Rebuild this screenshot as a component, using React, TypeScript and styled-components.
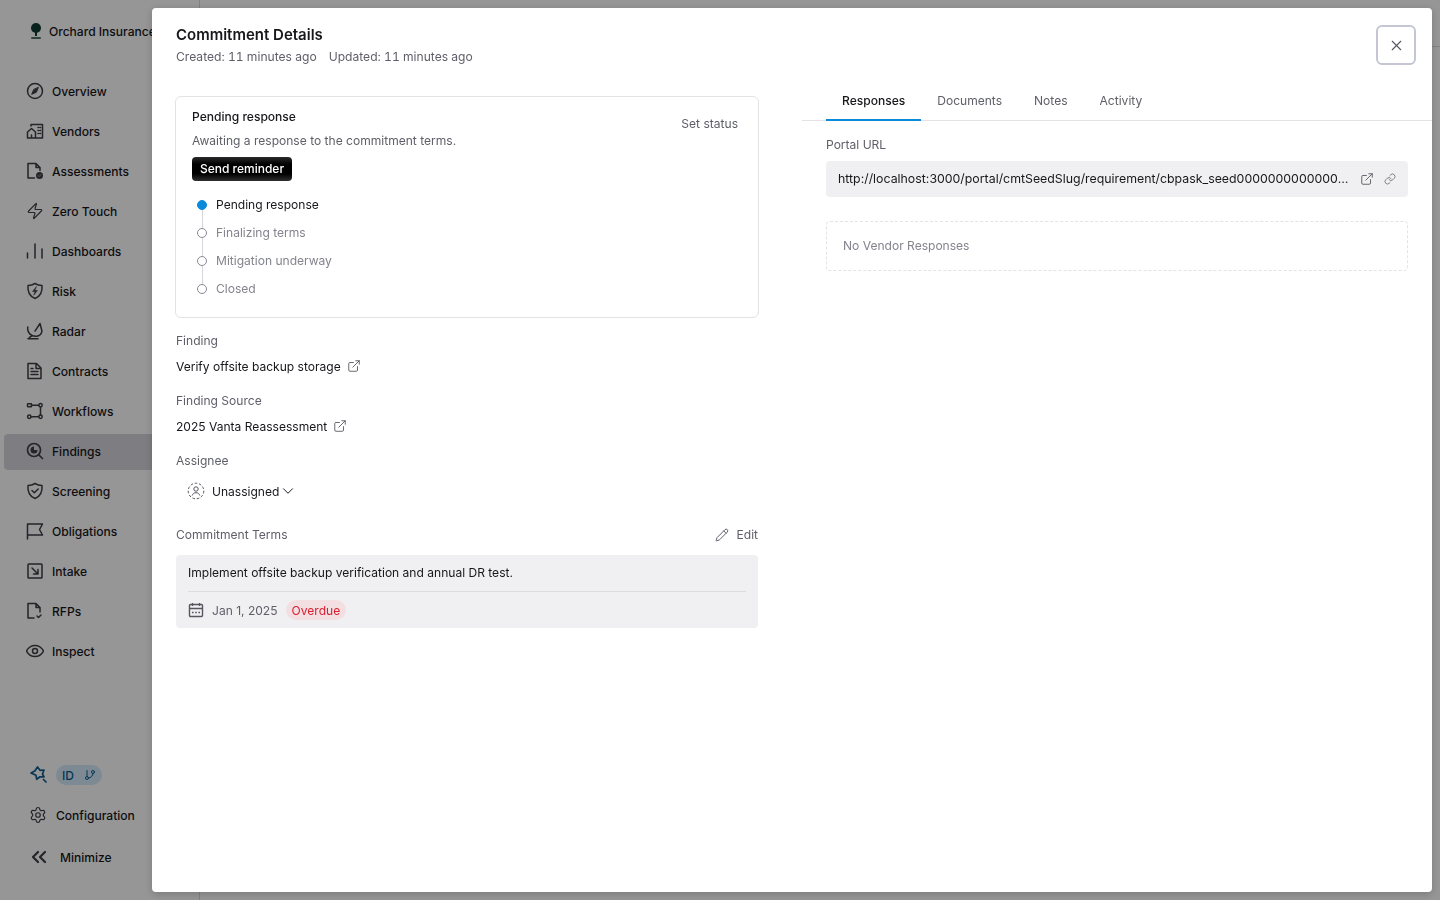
import * as React from "react";
import styled, { createGlobalStyle } from "styled-components";
import { ChevronDown, ChevronsLeft, ExternalLink, GitBranch, Link, Pencil, Settings, X, Zap } from "lucide-react";

const GlobalStyle = createGlobalStyle`
  html, body {
    margin: 0;
    height: 100%;
    overflow: hidden;
    background: #fff;
    font-family: Inter, "Liberation Sans", sans-serif;
    font-size: 12.060px;
    color: #17171c;
  }
  * { box-sizing: border-box; }
`;

const Glyph = ({ children }: { children: React.ReactNode }) => (
  <svg
    width="18"
    height="18"
    viewBox="0 0 18 18"
    fill="none"
    stroke="currentColor"
    strokeWidth="1.5"
    strokeLinecap="round"
    strokeLinejoin="round"
  >
    {children}
  </svg>
);

const OverviewIcon = () => (
  <Glyph>
    <circle cx="9" cy="9" r="7.5" />
    <path d="M12.300 5.700L10.300 10.300 5.700 12.300 7.700 7.700z" fill="currentColor" strokeWidth="1" />
  </Glyph>
);
const VendorsIcon = () => (
  <Glyph>
    <path d="M1.500 16V10L5.500 6.500 9.500 10V16zM5.500 16V13M5 4V2.500H16.500V16H9.500" />
    <path d="M12 5.500h.6M14 5.500h.6M12 8.500h.6M14 8.500h.6M12 11.500h.6M14 11.500h.6" />
  </Glyph>
);
const AssessmentsIcon = () => (
  <Glyph>
    <path d="M8.500 16H2V1.500H10L14 5.500V8.500M10 1.500V5.500H14" />
    <circle cx="13.500" cy="13.500" r="3.500" fill="currentColor" stroke="none" />
    <path d="M12 13.500l1.100 1.100 1.800-1.900" stroke="#999" strokeWidth="1" />
  </Glyph>
);
const DashboardsIcon = () => (
  <Glyph>
    <path d="M1.500 16V11M9 16V2M16 16V7" />
  </Glyph>
);
const RiskIcon = () => (
  <Glyph>
    <path d="M9 1.500C11 2.800 13.300 3.500 16 3.500 16.500 10 14.500 14.500 9 16.500 3.500 14.500 1.500 10 2 3.500 4.700 3.500 7 2.800 9 1.500z" />
    <path d="M10.300 4.800L6.500 9.500H9L7.700 13.200 11.500 8.500H9z" fill="currentColor" strokeWidth=".5" />
  </Glyph>
);
const RadarIcon = () => (
  <Glyph>
    <path d="M1.800 5C.8 11 5.800 14.800 10.500 14.300 13.500 14 15.500 11.800 16 9.200M9 9.200L14 1.500 16 9.200" />
    <path d="M2 16.800H12M2.500 16.800C3.500 15.500 4.500 14.500 6 13.800" />
  </Glyph>
);
const ContractsIcon = () => (
  <Glyph>
    <path d="M2 16.500V1.500H10.500L15 6V16.500zM10 1.500V6.500H15M5 9.500H12M5 12.500H12M5 6.500H7" />
  </Glyph>
);
const WorkflowsIcon = () => (
  <Glyph>
    <rect x="1.500" y="1.800" width="4" height="3" rx=".6" />
    <circle cx="14.500" cy="3.300" r="1.700" />
    <circle cx="3.300" cy="14.700" r="1.700" />
    <circle cx="14.500" cy="14.700" r="1.700" />
    <path d="M5.500 3.300H12.800M14.500 5V13M5 14.700H12.800" />
  </Glyph>
);
const FindingsIcon = () => (
  <Glyph>
    <circle cx="8" cy="8" r="6.500" strokeWidth="1.700" />
    <path d="M12.800 12.800L16.500 16.500" strokeWidth="1.700" />
    <path d="M8 4.500A3.500 3.500 0 1 0 11.500 8H8z" fill="currentColor" stroke="none" />
  </Glyph>
);
const ScreeningIcon = () => (
  <Glyph>
    <path d="M9 1.500C11 2.800 13.300 3.500 16 3.500 16.500 10 14.500 14.500 9 16.500 3.500 14.500 1.500 10 2 3.500 4.700 3.500 7 2.800 9 1.500z" />
    <path d="M6 8.500L8.300 10.800 12.200 7" />
  </Glyph>
);
const ObligationsIcon = () => (
  <Glyph>
    <path d="M1.500 17V2H16.500L13.500 7.500 16.500 13H1.500" />
  </Glyph>
);
const IntakeIcon = () => (
  <Glyph>
    <rect x="2" y="2" width="14" height="14" rx=".8" />
    <path d="M6 6L12 12M12 7.500V12H7.500" />
  </Glyph>
);
const RfpsIcon = () => (
  <Glyph>
    <path d="M8 16H2V1.500H10L14 5.500V10M10 1.500V5.500H14M11 14L12.500 15.500 15 13" />
  </Glyph>
);
const InspectIcon = () => (
  <Glyph>
    <path d="M.5 9C2.500 5.300 5.500 3.500 9 3.500S15.500 5.300 17.500 9C15.500 12.700 12.500 14.500 9 14.500S2.500 12.700.5 9z" />
    <circle cx="9" cy="9" r="2.500" />
  </Glyph>
);
const LogoIcon = () => (
  <svg width="16" height="18" viewBox="0 0 16 18">
    <circle cx="8" cy="6" r="5" fill="#0f3d2e" />
    <rect x="7" y="9" width="2" height="5" fill="#0f3d2e" />
    <rect x="3" y="15" width="10" height="2" rx="1" fill="#55736a" />
  </svg>
);
const SparkleIcon = () => (
  <svg width="20" height="20" viewBox="0 0 20 20" fill="none" stroke="#0e5c8f" strokeWidth="1.700" strokeLinejoin="round" strokeLinecap="round">
    <path d="M8.500 2L11 5.300 15 5 13.500 9 15 12 11 11.800 7.700 14.300 7 10.300 2 8 5.800 6z" />
    <path d="M14.500 14.500L17 17" />
  </svg>
);
const UnassignedIcon = () => (
  <svg width="18" height="18" viewBox="0 0 18 18" fill="none" stroke="#56565f" strokeWidth="1">
    <circle cx="9" cy="9" r="7.800" strokeDasharray="2.600 1.800" />
    <circle cx="9" cy="7" r="2.200" />
    <path d="M5.200 13.500C5.800 11.500 7.200 10.700 9 10.700S12.200 11.500 12.800 13.500" />
  </svg>
);
const CalendarIcon = () => (
  <svg width="16" height="16" viewBox="0 0 16 16" fill="none" stroke="#56565f" strokeWidth="1.400">
    <rect x="1.500" y="2.500" width="13" height="12" rx="1" />
    <path d="M1.500 6.500H14.500M4.500 1V4M11.500 1V4" />
    <path d="M4 10.500H12" strokeDasharray="1.600 1.600" />
  </svg>
);

const Shell = styled.div`
  display: flex;
  height: 900px;
`;

const Sidebar = styled.aside`
  width: 200px;
  flex: none;
  display: flex;
  flex-direction: column;
  border-right: 1px solid #dcdce0;
  padding: 0 4px 31px;
`;

const Brand = styled.div`
  height: 48px;
  margin-top: 7px;
  padding-left: 24px;
  display: flex;
  align-items: center;
  gap: 5px;
  font-weight: 500;
  white-space: nowrap;
`;

const NavList = styled.nav`
  margin-top: 19px;
  display: flex;
  flex-direction: column;
  gap: 4px;
`;

const NavItem = styled.div<{ $active?: boolean }>`
  height: 36px;
  padding: 0 0 2px 22px;
  display: flex;
  align-items: center;
  gap: 8px;
  border-radius: 4px;
  font-weight: 500;
  background: ${(p) => (p.$active ? "#d7d7dd" : "transparent")};
  svg {
    flex: none;
    color: #3f3f47;
  }
`;

const SidebarFoot = styled.div`
  margin-top: auto;
  display: flex;
  flex-direction: column;
`;

const EnvRow = styled.div`
  height: 20px;
  padding-left: 25px;
  display: flex;
  align-items: center;
  gap: 7px;
`;

const EnvPill = styled.div`
  height: 20px;
  width: 46px;
  border-radius: 10px;
  background: #d5ebfb;
  color: #0e5c8f;
  font-weight: 500;
  display: flex;
  align-items: center;
  padding-left: 6px;
  gap: 10px;
`;

const FootLink = styled.div<{ $indent: number }>`
  height: 24px;
  margin-top: 18px;
  padding-left: ${(p) => p.$indent}px;
  display: flex;
  align-items: center;
  gap: 9px;
  font-weight: 500;
  svg {
    color: #3f3f47;
  }
`;

const Main = styled.main`
  flex: 1;
`;

const TopBar = styled.div`
  height: 47px;
  border-bottom: 1px solid #dcdce0;
`;

const Overlay = styled.div`
  position: fixed;
  inset: 0;
  background: rgba(0, 0, 0, 0.41);
`;

const Modal = styled.section`
  position: fixed;
  left: 152px;
  top: 8px;
  width: 1280px;
  height: 884px;
  background: #fff;
  border-radius: 4px;
  box-shadow: 0 2px 8px rgba(0, 0, 0, 0.2);
  display: flex;
  flex-direction: column;
`;

const ModalHeader = styled.header`
  height: 72px;
  padding: 17px 16px 0 24px;
  display: flex;
  justify-content: space-between;
  align-items: flex-start;
`;

const Title = styled.h2`
  margin: 0;
  font-size: 15px;
  line-height: 20px;
  font-weight: 600;
  color: #17171c;
`;

const Subtitle = styled.div`
  margin-top: 3px;
  display: flex;
  gap: 12px;
  line-height: 18px;
  color: #5f5f69;
  font-size: 12.100px;
  font-variant-numeric: tabular-nums;
`;

const CloseButton = styled.button`
  width: 40px;
  height: 40px;
  border: 2px solid #c4c6d4;
  border-radius: 6px;
  background: #fff;
  color: #55555e;
  display: flex;
  align-items: center;
  justify-content: center;
  padding: 0;
`;

const Columns = styled.div`
  flex: 1;
  display: flex;
  min-height: 0;
`;

const LeftColumn = styled.div`
  width: 606px;
  flex: none;
  padding: 16px 0 0 24px;
`;

const RightColumn = styled.div`
  flex: 1;
  margin-left: 44px;
  min-width: 0;
`;

const StatusCard = styled.div`
  width: 584px;
  height: 222px;
  margin-left: -1px;
  border: 1px solid #e3e3e7;
  border-radius: 6px;
  padding: 10px 16px;
  position: relative;
`;

const SetStatus = styled.div`
  position: absolute;
  top: 19px;
  right: 20px;
  line-height: 16px;
  color: #5f5f69;
`;

const StatusTitle = styled.div`
  line-height: 20px;
  font-weight: 500;
`;

const StatusHint = styled.div`
  margin-top: 4px;
  line-height: 20px;
  color: #5f5f69;
`;

const ReminderButton = styled.button`
  margin-top: 6px;
  height: 24px;
  width: 100px;
  padding: 0 0 1px;
  border: 0;
  border-radius: 4px;
  color: #fff;
  font: 500 12px Inter, sans-serif;
  background: linear-gradient(#2b2b2b, #000 30%, #000 70%, #2f2f2f);
`;

const Steps = styled.ol`
  list-style: none;
  margin: 9px 0 0;
  padding: 0 0 0 5px;
`;

const Step = styled.li<{ $current?: boolean }>`
  height: 28px;
  display: flex;
  align-items: center;
  gap: 9px;
  position: relative;
  color: ${(p) => (p.$current ? "#17171c" : "#84848e")};
  &:not(:last-child)::after {
    content: "";
    position: absolute;
    left: 4.500px;
    top: 15px;
    width: 1px;
    height: 28px;
    background: #d5d5db;
  }
`;

const StepDot = styled.span<{ $current?: boolean }>`
  width: 10px;
  height: 10px;
  margin-top: 2px;
  flex: none;
  border-radius: 50%;
  position: relative;
  z-index: 1;
  background: ${(p) => (p.$current ? "#0a8ada" : "#fff")};
  border: 1px solid ${(p) => (p.$current ? "#0a8ada" : "#8a8a96")};
`;

const FieldLabel = styled.div`
  line-height: 16px;
  color: #5f5f69;
`;

const FieldBlock = styled.div`
  margin-top: 19px;
  ${StatusCard} + & {
    margin-top: 15px;
  }
`;

const FieldLink = styled.div`
  margin-top: 9px;
  height: 16px;
  display: flex;
  align-items: center;
  gap: 5px;
  svg {
    margin-left: 1px;
    color: #55555e;
  }
`;

const AssigneeRow = styled.div`
  margin-top: 6px;
  height: 32px;
  padding-left: 11px;
  display: flex;
  align-items: center;
  gap: 7px;
`;

const AssigneeChevron = styled(ChevronDown)`
  margin-left: -7px;
`;

const TermsHead = styled.div`
  margin-top: 20px;
  display: flex;
  justify-content: space-between;
  align-items: center;
  width: 582px;
  height: 16px;
`;

const EditLink = styled.div`
  height: 16px;
  line-height: 16px;
  display: flex;
  align-items: center;
  gap: 8px;
  color: #5f5f69;
`;

const TermsBox = styled.div`
  margin-top: 12px;
  width: 582px;
  height: 73px;
  border-radius: 4px;
  background: #f0f0f2;
  padding: 0 12px;
`;

const TermsText = styled.div`
  height: 37px;
  padding-bottom: 2px;
  border-bottom: 1px solid #dcdce0;
  display: flex;
  align-items: center;
`;

const TermsMeta = styled.div`
  height: 36px;
  display: flex;
  align-items: center;
  color: #5f5f69;
  gap: 8px;
`;

const OverdueBadge = styled.span`
  height: 20px;
  padding: 0 6px;
  border-radius: 10px;
  background: #f3dfe2;
  color: #d9202f;
  display: flex;
  align-items: center;
`;

const Tabs = styled.div`
  height: 41px;
  padding-left: 24px;
  display: flex;
  border-bottom: 1px solid #e3e3e7;
`;

const Tab = styled.div<{ $active?: boolean }>`
  height: 41px;
  padding: 2px 16px 0;
  display: flex;
  align-items: center;
  font-weight: ${(p) => (p.$active ? 500 : 400)};
  color: ${(p) => (p.$active ? "#17171c" : "#5f5f69")};
  border-bottom: 2px solid ${(p) => (p.$active ? "#0a8ada" : "transparent")};
`;

const ResponsesPane = styled.div`
  padding: 16px 24px 0;
`;

const UrlBox = styled.div`
  margin-top: 8px;
  height: 36px;
  border-radius: 4px;
  background: #f0f0f2;
  padding: 0 12px;
  display: flex;
  align-items: center;
  gap: 10px;
  font-size: 12.350px;
  svg {
    flex: none;
    color: #55555e;
  }
`;

const UrlText = styled.span`
  flex: 1;
  min-width: 0;
  padding-bottom: 2px;
  white-space: nowrap;
  overflow: hidden;
  text-overflow: ellipsis;
`;

const EmptyResponses = styled.div`
  margin-top: 24px;
  height: 50px;
  border: 1px dashed #e3e3e7;
  border-radius: 4px;
  padding: 0 0 2px 16px;
  display: flex;
  align-items: center;
  color: #84848e;
`;

const navItems: { label: string; icon: React.ReactNode; active?: boolean }[] = [
  { label: "Overview", icon: <OverviewIcon /> },
  { label: "Vendors", icon: <VendorsIcon /> },
  { label: "Assessments", icon: <AssessmentsIcon /> },
  { label: "Zero Touch", icon: <Zap size={18} strokeWidth={1.6} /> },
  { label: "Dashboards", icon: <DashboardsIcon /> },
  { label: "Risk", icon: <RiskIcon /> },
  { label: "Radar", icon: <RadarIcon /> },
  { label: "Contracts", icon: <ContractsIcon /> },
  { label: "Workflows", icon: <WorkflowsIcon /> },
  { label: "Findings", icon: <FindingsIcon />, active: true },
  { label: "Screening", icon: <ScreeningIcon /> },
  { label: "Obligations", icon: <ObligationsIcon /> },
  { label: "Intake", icon: <IntakeIcon /> },
  { label: "RFPs", icon: <RfpsIcon /> },
  { label: "Inspect", icon: <InspectIcon /> },
];

const steps = ["Pending response", "Finalizing terms", "Mitigation underway", "Closed"];

export default function App() {
  return (
    <>
      <GlobalStyle />
      <Shell>
        <Sidebar>
          <Brand>
            <LogoIcon />
            Orchard Insurance
          </Brand>
          <NavList>
            {navItems.map((item) => (
              <NavItem key={item.label} $active={item.active}>
                {item.icon}
                {item.label}
              </NavItem>
            ))}
          </NavList>
          <SidebarFoot>
            <EnvRow>
              <SparkleIcon />
              <EnvPill>
                ID
                <GitBranch size={12} strokeWidth={2} />
              </EnvPill>
            </EnvRow>
            <FootLink $indent={25}>
              <Settings size={18} strokeWidth={1.6} />
              Configuration
            </FootLink>
            <FootLink $indent={23}>
              <ChevronsLeft size={24} strokeWidth={2.2} />
              Minimize
            </FootLink>
          </SidebarFoot>
        </Sidebar>
        <Main>
          <TopBar />
        </Main>
      </Shell>
      <Overlay />
      <Modal>
        <ModalHeader>
          <div>
            <Title>Commitment Details</Title>
            <Subtitle>
              <span>Created: 11 minutes ago</span>
              <span>Updated: 11 minutes ago</span>
            </Subtitle>
          </div>
          <CloseButton>
            <X size={17} strokeWidth={1.6} />
          </CloseButton>
        </ModalHeader>
        <Columns>
          <LeftColumn>
            <StatusCard>
              <SetStatus>Set status</SetStatus>
              <StatusTitle>Pending response</StatusTitle>
              <StatusHint>Awaiting a response to the commitment terms.</StatusHint>
              <ReminderButton>Send reminder</ReminderButton>
              <Steps>
                {steps.map((step, i) => (
                  <Step key={step} $current={i === 0}>
                    <StepDot $current={i === 0} />
                    {step}
                  </Step>
                ))}
              </Steps>
            </StatusCard>
            <FieldBlock>
              <FieldLabel>Finding</FieldLabel>
              <FieldLink>
                Verify offsite backup storage
                <ExternalLink size={14} strokeWidth={1.5} />
              </FieldLink>
            </FieldBlock>
            <FieldBlock>
              <FieldLabel>Finding Source</FieldLabel>
              <FieldLink>
                2025 Vanta Reassessment
                <ExternalLink size={14} strokeWidth={1.5} />
              </FieldLink>
            </FieldBlock>
            <FieldBlock>
              <FieldLabel>Assignee</FieldLabel>
              <AssigneeRow>
                <UnassignedIcon />
                <span>Unassigned</span>
                <AssigneeChevron size={18} strokeWidth={1.3} />
              </AssigneeRow>
            </FieldBlock>
            <TermsHead>
              <FieldLabel>Commitment Terms</FieldLabel>
              <EditLink>
                <Pencil size={14} strokeWidth={1.7} />
                Edit
              </EditLink>
            </TermsHead>
            <TermsBox>
              <TermsText>Implement offsite backup verification and annual DR test.</TermsText>
              <TermsMeta>
                <CalendarIcon />
                <span>Jan 1, 2025</span>
                <OverdueBadge>Overdue</OverdueBadge>
              </TermsMeta>
            </TermsBox>
          </LeftColumn>
          <RightColumn>
            <Tabs>
              <Tab $active>Responses</Tab>
              <Tab>Documents</Tab>
              <Tab>Notes</Tab>
              <Tab>Activity</Tab>
            </Tabs>
            <ResponsesPane>
              <FieldLabel>Portal URL</FieldLabel>
              <UrlBox>
                <UrlText>http://localhost:3000/portal/cmtSeedSlug/requirement/cbpask_seed00000000000000000000000000</UrlText>
                <ExternalLink size={14} strokeWidth={1.5} />
                <Link size={12} strokeWidth={1.4} />
              </UrlBox>
              <EmptyResponses>No Vendor Responses</EmptyResponses>
            </ResponsesPane>
          </RightColumn>
        </Columns>
      </Modal>
    </>
  );
}
